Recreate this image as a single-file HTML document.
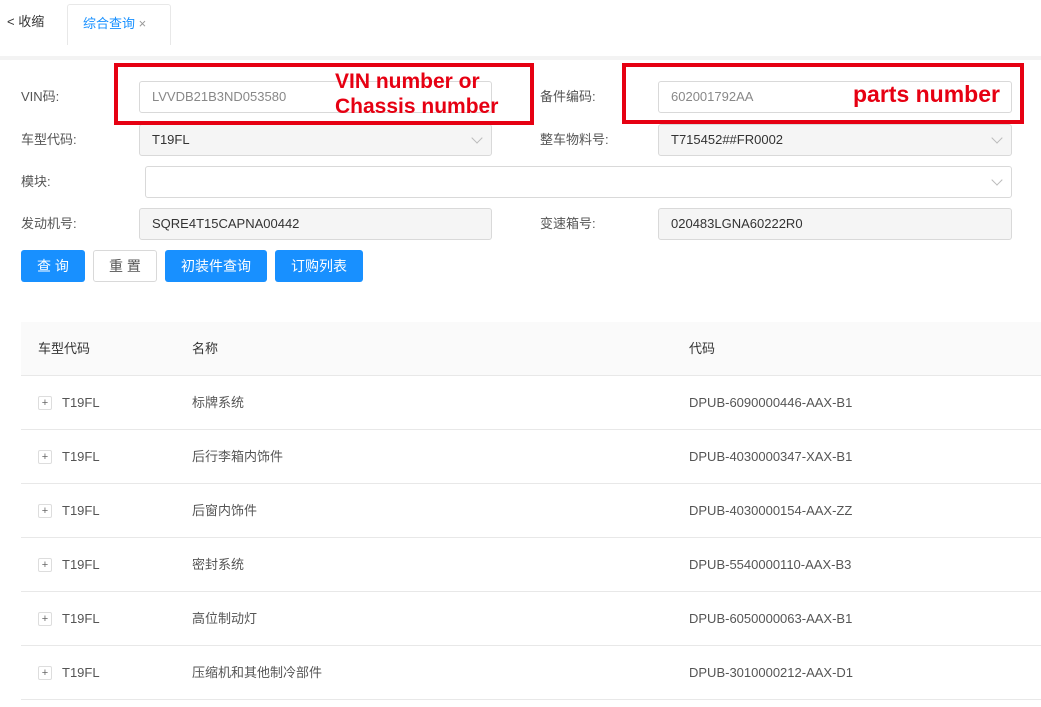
<!DOCTYPE html>
<html><head><meta charset="utf-8"><style>
*{box-sizing:border-box;margin:0;padding:0}
body{width:1041px;height:707px;overflow:hidden;background:#fff;font-family:"Liberation Sans","Noto Sans CJK SC",sans-serif;font-size:13px;color:#555;position:relative;line-height:16px}
.a{position:absolute}
.inp{position:absolute;height:32px;border:1px solid #d9d9d9;border-radius:3px;padding-left:12px;line-height:30px;color:#333;font-size:13px}
.dis{background:#f5f5f5}
.lbl{position:absolute;font-size:13px;color:#555;line-height:16px}
.arr{position:absolute;right:10px;top:9px;width:8px;height:8px;border-right:1px solid #bbb;border-bottom:1px solid #bbb;transform:rotate(45deg)}
.btn{position:absolute;top:250px;height:32px;border-radius:3px;line-height:32px;text-align:center;font-size:14px;color:#fff;background:#1890ff}
.red{position:absolute;border:4px solid #e60012}
.rt{position:absolute;color:#e60012;font-weight:bold;font-size:21px;line-height:25px;font-family:"Liberation Sans",sans-serif}
.row{position:absolute;left:21px;width:1020px;height:54px;border-bottom:1px solid #e8e8e8}
.row span{position:absolute;top:19px;font-size:13px;color:#555;line-height:16px}
.pl{position:absolute;left:17px;top:20px;width:14px;height:14px;border:1px solid #ddd;border-radius:2px;font-size:11px;line-height:12px;text-align:center;color:#666}
</style></head><body>
<div class="a" style="left:7px;top:14px;font-size:13px;color:#333">&lt; 收缩</div>
<div class="a" style="left:67px;top:4px;width:104px;height:41px;border:1px solid #e8e8e8;border-bottom:none;border-radius:3px 3px 0 0"></div>
<div class="a" style="left:83px;top:16px;color:#1890ff;font-size:13px">综合查询 <span style="color:#999">×</span></div>
<div class="a" style="left:0;top:56px;width:1041px;height:4px;background:#f3f3f3"></div>

<div class="lbl" style="left:21px;top:89px">VIN码:</div>
<div class="inp" style="left:139px;top:81px;width:353px;color:#888">LVVDB21B3ND053580</div>
<div class="lbl" style="left:540px;top:89px">备件编码:</div>
<div class="inp" style="left:658px;top:81px;width:354px;color:#888">602001792AA</div>

<div class="lbl" style="left:21px;top:132px">车型代码:</div>
<div class="inp dis" style="left:139px;top:124px;width:353px">T19FL<div class="arr"></div></div>
<div class="lbl" style="left:540px;top:132px">整车物料号:</div>
<div class="inp dis" style="left:658px;top:124px;width:354px">T715452##FR0002<div class="arr"></div></div>

<div class="lbl" style="left:21px;top:174px">模块:</div>
<div class="inp" style="left:145px;top:166px;width:867px"><div class="arr"></div></div>

<div class="lbl" style="left:21px;top:216px">发动机号:</div>
<div class="inp dis" style="left:139px;top:208px;width:353px">SQRE4T15CAPNA00442</div>
<div class="lbl" style="left:540px;top:216px">变速箱号:</div>
<div class="inp dis" style="left:658px;top:208px;width:354px">020483LGNA60222R0</div>

<div class="btn" style="left:21px;width:64px">查 询</div>
<div class="btn" style="left:93px;width:64px;background:#fff;color:#555;border:1px solid #d9d9d9;line-height:30px">重 置</div>
<div class="btn" style="left:165px;width:102px">初装件查询</div>
<div class="btn" style="left:275px;width:88px">订购列表</div>

<div class="red" style="left:114px;top:63px;width:420px;height:62px"></div>
<div class="rt" style="left:335px;top:69px">VIN number or<br>Chassis number</div>
<div class="red" style="left:622px;top:63px;width:402px;height:61px"></div>
<div class="rt" style="left:853px;top:82px;font-size:23px">parts number</div>

<div class="a" style="left:21px;top:322px;width:1020px;height:54px;background:#fafafa;border-bottom:1px solid #e8e8e8">
<span class="a" style="left:17px;top:19px;color:#333">车型代码</span>
<span class="a" style="left:171px;top:19px;color:#333">名称</span>
<span class="a" style="left:668px;top:19px;color:#333">代码</span>
</div>
<div class="row" style="top:376px"><div class="pl">+</div><span style="left:41px">T19FL</span><span style="left:171px">标牌系统</span><span style="left:668px">DPUB-6090000446-AAX-B1</span></div>
<div class="row" style="top:430px"><div class="pl">+</div><span style="left:41px">T19FL</span><span style="left:171px">后行李箱内饰件</span><span style="left:668px">DPUB-4030000347-XAX-B1</span></div>
<div class="row" style="top:484px"><div class="pl">+</div><span style="left:41px">T19FL</span><span style="left:171px">后窗内饰件</span><span style="left:668px">DPUB-4030000154-AAX-ZZ</span></div>
<div class="row" style="top:538px"><div class="pl">+</div><span style="left:41px">T19FL</span><span style="left:171px">密封系统</span><span style="left:668px">DPUB-5540000110-AAX-B3</span></div>
<div class="row" style="top:592px"><div class="pl">+</div><span style="left:41px">T19FL</span><span style="left:171px">高位制动灯</span><span style="left:668px">DPUB-6050000063-AAX-B1</span></div>
<div class="row" style="top:646px"><div class="pl">+</div><span style="left:41px">T19FL</span><span style="left:171px">压缩机和其他制冷部件</span><span style="left:668px">DPUB-3010000212-AAX-D1</span></div>
</body></html>
